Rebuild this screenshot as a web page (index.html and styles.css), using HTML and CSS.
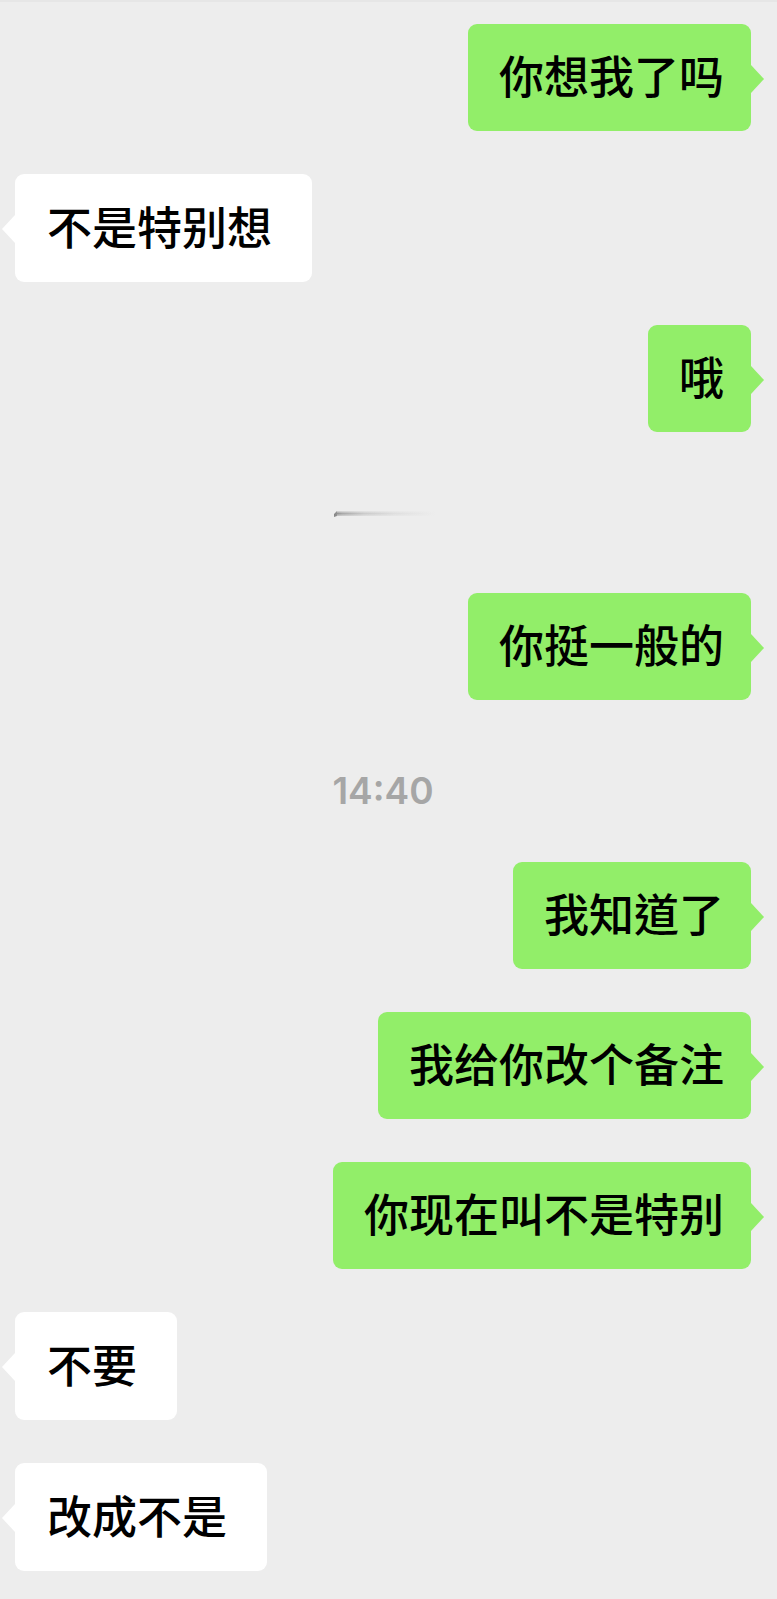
FILE: index.html
```html
<!DOCTYPE html>
<html lang="zh-CN">
<head>
    <meta charset="UTF-8">
    <meta name="viewport" content="width=device-width, initial-scale=1.0">
    <title>聊天</title>
    <link rel="stylesheet" href="styles.css">
</head>
<body>

<main class="chat">
    <div class="message sent"><p class="bubble">你想我了吗</p></div>
    <div class="message received"><p class="bubble">不是特别想</p></div>
    <div class="message sent"><p class="bubble">哦</p></div>

    <!-- Faded divider -->
    <div class="divider">
        <svg width="104" height="8" viewBox="0 0 104 8" aria-hidden="true">
            <defs>
                <linearGradient id="fade">
                    <stop offset="0" stop-color="#858585"/>
                    <stop offset="0.08" stop-color="#a8a8a8"/>
                    <stop offset="0.3" stop-color="#cbcbcb"/>
                    <stop offset="0.6" stop-color="#dfdfdf"/>
                    <stop offset="1" stop-color="#ededed"/>
                </linearGradient>
                <linearGradient id="edge" x2="0" y2="1">
                    <stop offset="0" stop-color="#ededed" stop-opacity="0.8"/>
                    <stop offset="0.5" stop-color="#ededed" stop-opacity="0"/>
                    <stop offset="1" stop-color="#ededed" stop-opacity="0.6"/>
                </linearGradient>
            </defs>
            <path d="M6 1H104V6H6L3 7V4Z" fill="url(#fade)"/>
            <path d="M6 1H104V6H6Z" fill="url(#edge)"/>
        </svg>
    </div>

    <div class="message sent"><p class="bubble">你挺一般的</p></div>

    <time class="time" datetime="14:40">14:40</time>

    <div class="message sent"><p class="bubble" lang="zh-TW">我知道了</p></div>
    <div class="message sent"><p class="bubble">我给你改个备注</p></div>
    <div class="message sent"><p class="bubble">你现在叫不是特别</p></div>
    <div class="message received"><p class="bubble">不要</p></div>
    <div class="message received"><p class="bubble">改成不是</p></div>
</main>

</body>
</html>
```
FILE: styles.css
```css
* {
    margin: 0;
    padding: 0;
    box-sizing: border-box;
}

body {
    font-family: "Noto Sans CJK SC", sans-serif;
    background-color: #ededed;
    color: #000;
}

.chat {
    display: flex;
    flex-direction: column;
    gap: 43px;
    padding: 22px 26px 28px 15px;
    border-top: 2px solid #e6e6e6;
}

.message {
    display: flex;
}

.sent {
    justify-content: flex-end;
}

.bubble {
    position: relative;
    border-radius: 9px;
    font-size: 45px;
    font-weight: 500;
    line-height: 67px;
}

.bubble:lang(zh-TW) {
    font-family: "Noto Sans CJK TC", sans-serif;
}

.sent .bubble {
    padding: 17px 27px 23px 31px;
    background-color: #92ee69;
}

.received .bubble {
    padding: 18px 40px 23px 32px;
    background-color: #fff;
}

/* Bubble tails */
.bubble::after {
    content: "";
    position: absolute;
    top: 41px;
    width: 13px;
    height: 28px;
    background-color: inherit;
}

.sent .bubble::after {
    left: 100%;
    clip-path: polygon(0 0, 100% 50%, 0 100%);
}

.received .bubble::after {
    right: 100%;
    clip-path: polygon(100% 0, 0 50%, 100% 100%);
}

.divider {
    padding: 35px 0 32px;
    text-align: center;
    line-height: 0;
}

.time {
    padding: 24px 0 4px;
    font-family: Inter, sans-serif;
    font-size: 37px;
    font-weight: 600;
    line-height: 48px;
    text-align: center;
    color: #a6a6a6;
}
```
